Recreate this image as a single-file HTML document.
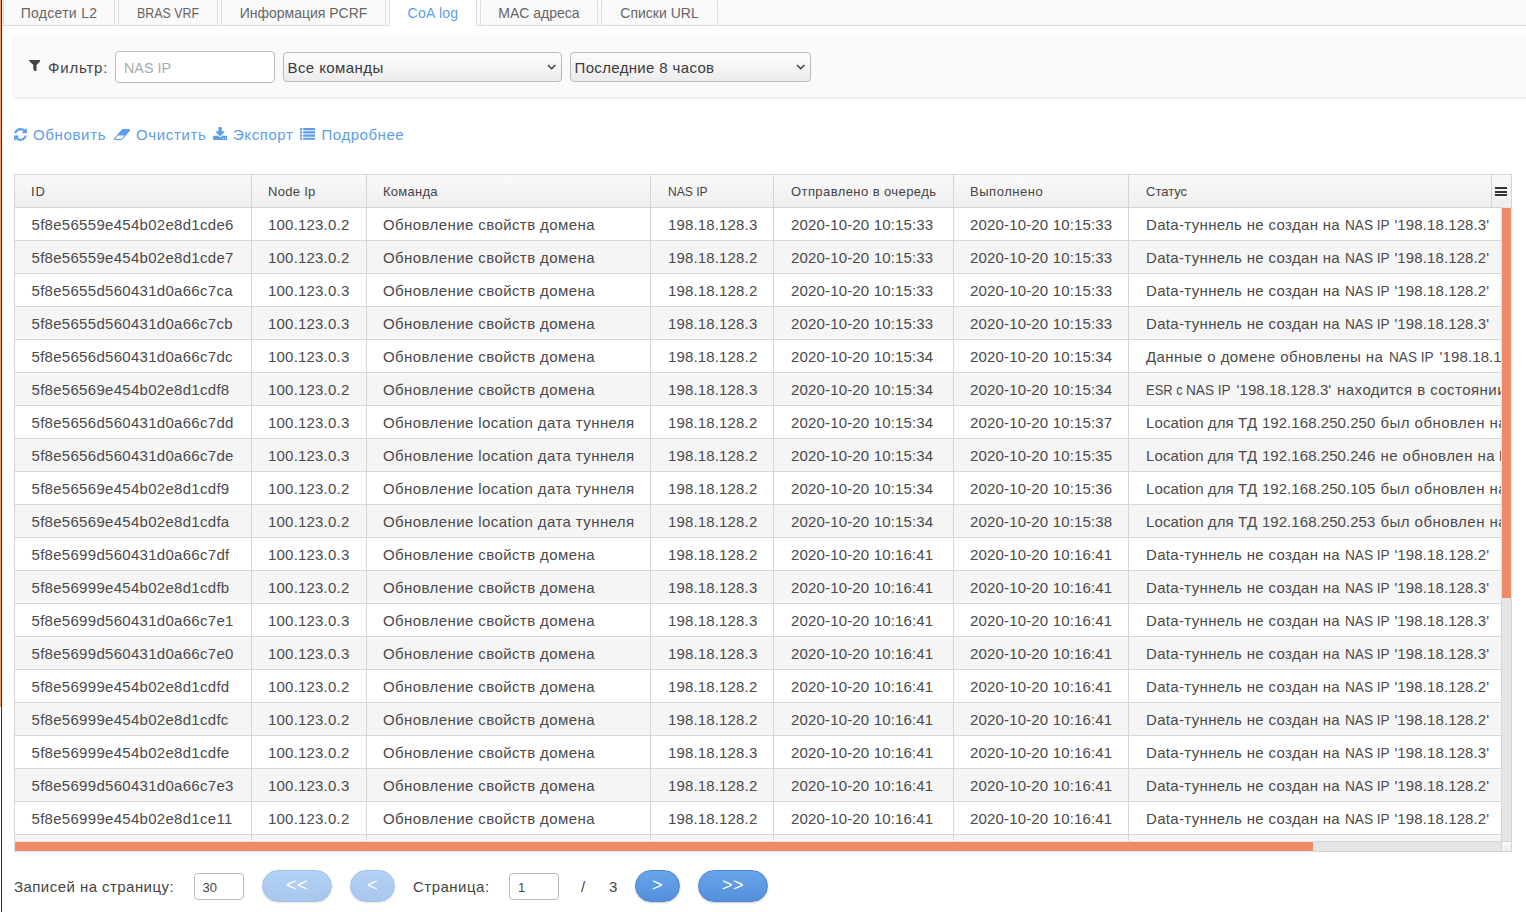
<!DOCTYPE html>
<html lang="ru">
<head>
<meta charset="utf-8">
<title>CoA log</title>
<style>
html,body{margin:0;padding:0;}
body{width:1526px;height:912px;overflow:hidden;background:#fff;position:relative;
  font-family:"Liberation Sans","DejaVu Sans",sans-serif;font-size:15px;color:#444;}
*{box-sizing:border-box;}
.edge-o{position:absolute;left:0;top:0;width:1px;height:707px;background:#fe986c;}
.edge-d{position:absolute;left:1px;top:0;width:1px;height:912px;background:#2c3136;}
/* tabs */
.tabbar{position:absolute;left:2px;top:0;width:1524px;height:26px;background:#fafafa;border-bottom:1px solid #ddd;}
.tab{position:absolute;top:-2px;height:28px;border:1px solid #ddd;border-radius:4px 4px 0 0;background:#fafafa;
  font-size:14px;color:#666;text-align:center;line-height:28px;white-space:nowrap;}
.tab.active{background:#fff;color:#5c9ded;border-bottom-color:#fff;}
.t1{left:1px;width:112px;letter-spacing:.3px}
.t2{left:116px;width:100px;}
.t3{left:219px;width:165px;}
.t4{left:387px;width:88px;letter-spacing:.25px}
.t5{left:478px;width:118px;}
.t6{left:599px;width:117px;}
/* filter */
.filter{position:absolute;left:14px;top:37px;width:1530px;height:60px;background:#fafafa;border-radius:3px;
  box-shadow:0 1px 3px rgba(0,0,0,.12);}
.filter .ico{position:absolute;left:14.5px;top:22.7px;width:11.8px;height:11.8px;}
.filter .lbl{letter-spacing:.8px;position:absolute;left:34px;top:21px;line-height:20px;font-size:15px;color:#444;white-space:nowrap;}
.filter .inp{position:absolute;left:101px;top:14px;width:160px;height:32px;border:1px solid #bbb;border-radius:4px;background:#fff;
  padding-left:7.5px;line-height:32px;color:#aaa;font-size:15px;}
.sel{position:absolute;top:15px;height:30px;border:1px solid #bababa;border-radius:4px;
  background:linear-gradient(#fdfdfd,#ececec);padding-left:3.5px;line-height:30px;font-size:15px;color:#3a3a3a;white-space:nowrap;}
.sel svg{position:absolute;right:4.5px;top:11.4px;}
.s1{left:269px;width:279px;letter-spacing:.42px}
.s2{left:556px;width:241px;letter-spacing:.35px}
/* toolbar */
.tb{position:absolute;top:0;left:0;width:0;height:0;font-size:15px;color:#5c9ded;white-space:nowrap;}
.tb a{position:absolute;top:125px;line-height:20px;color:#5c9ded;text-decoration:none;}
.tb svg{position:absolute;fill:#5c9ded;}
/* grid */
.grid{position:absolute;left:14px;top:174px;width:1498px;height:678px;border:1px solid #d4d4d4;background:#fff;overflow:hidden;}
.ghead{position:absolute;left:0;top:0;width:1496px;height:32px;background:linear-gradient(#fafafa,#eee);}
.ghead div{position:absolute;top:0;height:32px;border-right:1px solid #d4d4d4;padding-left:16px;line-height:34px;font-size:13px;color:#444;white-space:nowrap;}
.ghline{position:absolute;left:0;top:32px;width:1496px;height:1px;background:#d4d4d4;}
.gbody{position:absolute;left:0;top:33px;width:1486px;height:633px;overflow:hidden;}
table.gt{border-collapse:separate;border-spacing:0;table-layout:fixed;width:1900px;}
.gt td{height:33px;padding:0 0 0 16px;border-right:1px solid #d6d6d6;border-bottom:1px solid #d6d6d6;white-space:nowrap;overflow:hidden;font-size:15px;color:#4a4a4a;line-height:32px;}
.gt td span{position:relative;top:1px;}
.gt tr.even td{background:#f5f5f5;}
.c1{width:237px;letter-spacing:.29px;padding-left:16.5px!important}.c2{width:115px;letter-spacing:.2px}.c3{width:284px;letter-spacing:.41px}.c4{width:123px;letter-spacing:.15px;padding-left:17px!important}.c5{width:180px;letter-spacing:.16px;padding-left:17px!important}.c6{width:175px;letter-spacing:.16px;}.c7{width:786px;padding-left:17px!important}
.c7 b{font-weight:normal;display:inline-block;white-space:pre;vertical-align:top;}
.vs{position:absolute;left:1501px;top:208px;width:10px;height:633px;background:#e5e5e5;border-left:1px solid #d6d6d6;}
.vt{position:absolute;left:1501px;top:207px;width:11px;height:392px;background:#ee8b66;border:1px solid #e0e7eb;border-radius:1px;}
.hs{position:absolute;left:15px;top:841px;width:1486px;height:10px;background:#e5e5e5;border-top:1px solid #d6d6d6;}
.ht{position:absolute;left:14px;top:841px;width:1300px;height:11px;background:#ee8b66;border:1px solid #e0e7eb;border-radius:1px;}
.corner{position:absolute;left:1501px;top:841px;width:10px;height:10px;background:linear-gradient(#fafafa,#eee);border-left:1px solid #d6d6d6;border-top:1px solid #d6d6d6;}
.menu{position:absolute;left:1476px;top:0;width:20px;height:32px;border-left:1px solid #d4d4d4;}
.menu i{position:absolute;left:3px;width:12px;height:2px;background:#333;}
.menu i:nth-child(1){top:12px}.menu i:nth-child(2){top:15.5px}.menu i:nth-child(3){top:19px}
/* pager */
.pg{position:absolute;left:0;top:860px;width:1526px;height:52px;font-size:15px;color:#444;}
.pg span{position:absolute;top:17px;line-height:20px;white-space:nowrap;}
.pg .pin{position:absolute;top:13px;width:50px;height:27px;border:1px solid #bbb;border-radius:4px;background:#fff;font-size:13px;line-height:27px;padding-left:8px;color:#444;}
.btn{position:absolute;top:10px;height:32px;border-radius:16px;border:1px solid #4d86cf;background:linear-gradient(#69a5ea,#548fdb);
  color:#fff;text-align:center;line-height:29px;font-size:18px;letter-spacing:.5px;box-shadow:0 1px 2px rgba(0,0,0,.2);}
.btn.dis{opacity:.5;}
</style>
</head>
<body>
<div class="edge-o"></div><div class="edge-d"></div>
<div class="tabbar">
<div class="tab t1">Подсети L2</div>
<div class="tab t2"><span style="display:inline-block;transform:scaleX(.885)">BRAS VRF</span></div>
<div class="tab t3">Информация PCRF</div>
<div class="tab t4 active">CoA log</div>
<div class="tab t5">MAC адреса</div>
<div class="tab t6">Списки URL</div>
</div>
<div class="filter">
<svg class="ico" viewBox="191 256 1410 1408"><path d="M1595 295q17 41-14 70l-493 493v742q0 42-39 59-13 5-25 5-27 0-45-19l-256-256q-19-19-19-45V858L211 365q-31-29-14-70 17-39 59-39h1280q42 0 59 39z" fill="#444"/></svg>
<div class="lbl">Фильтр:</div>
<div class="inp"><span style="display:inline-block;transform:scaleX(.957);transform-origin:0 50%">NAS IP</span></div>
<div class="sel s1">Все команды<svg width="9.4" height="5.6" viewBox="0 0 10 6"><path d="M1 1l4 4 4-4" fill="none" stroke="#3a3a3a" stroke-width="1.5"/></svg></div>
<div class="sel s2">Последние 8 часов<svg width="9.4" height="5.6" viewBox="0 0 10 6"><path d="M1 1l4 4 4-4" fill="none" stroke="#3a3a3a" stroke-width="1.5"/></svg></div>
</div>
<div class="tb">
<svg style="left:14px;top:128px;width:12.9px;height:12.9px" viewBox="0 0 1536 1536"><path d="M1511 928q0 5-1 7-64 268-268 434.5T764 1536q-146 0-282.5-55T238 1324l-129 129q-19 19-45 19t-45-19-19-45V960q0-26 19-45t45-19h448q26 0 45 19t19 45-19 45l-137 137q71 66 161 102t187 36q134 0 250-65t186-179q11-17 53-117 8-23 30-23h192q13 0 22.5 9.500t9.500 22.500zm25-800v448q0 26-19 45t-45 19h-448q-26 0-45-19t-19-45 19-45l138-138Q969 256 768 256q-134 0-250 65T332 500q-11 17-53 117-8 23-30 23H50q-13 0-22.500-9.500T18 608v-7q65-268 270-434.500T768 0q146 0 284 55.500T1297 212l130-129q19-19 45-19t45 19 19 45z"/></svg>
<a style="left:33px;letter-spacing:.65px">Обновить</a>
<svg style="left:114px;top:129px;width:16.2px;height:11px" viewBox="0 256 1920 1280" preserveAspectRatio="none"><path d="M896 1408l336-384H464l-336 384h768zm1013-1077q15 34 9.500 71.500T1888 468l-896 1024q-38 44-96 44H128q-38 0-69.500-20.500T11 1461q-15-34-9.500-71.500T32 1324L928 300q38-44 96-44h768q38 0 69.500 20.500T1909 331z"/></svg>
<a style="left:136px;letter-spacing:.63px">Очистить</a>
<svg style="left:213.1px;top:127px;width:14.3px;height:13px" viewBox="64 0 1664 1536"><path d="M1344 1344q0-26-19-45t-45-19-45 19-19 45 19 45 45 19 45-19 19-45zm256 0q0-26-19-45t-45-19-45 19-19 45 19 45 45 19 45-19 19-45zm128-224v320q0 40-28 68t-68 28H160q-40 0-68-28t-28-68v-320q0-40 28-68t68-28h465l135 136q58 56 136 56t136-56l136-136h464q40 0 68 28t28 68zm-325-569q17 41-14 70l-448 448q-18 19-45 19t-45-19L403 621q-31-29-14-70 17-39 59-39h256V64q0-26 19-45t45-19h256q26 0 45 19t19 45v448h256q42 0 59 39z"/></svg>
<a style="left:233px;letter-spacing:.57px">Экспорт</a>
<svg style="left:300.2px;top:127px;width:15px;height:15px" viewBox="0 0 1792 1792"><path d="M0 128h256v256H0zM384 128h1408v256H384zM0 512h256v256H0zM384 512h1408v256H384zM0 896h256v256H0zM384 896h1408v256H384zM0 1280h256v256H0zM384 1280h1408v256H384z"/></svg>
<a style="left:321.5px;letter-spacing:.55px">Подробнее</a>
</div>
<div class="grid">
<div class="ghead">
<div style="left:0;width:237px;letter-spacing:.9px">ID</div>
<div style="left:237px;width:115px;letter-spacing:.3px">Node Ip</div>
<div style="left:352px;width:284px;letter-spacing:.25px">Команда</div>
<div style="left:636px;width:123px;padding-left:17px"><span style="display:inline-block;transform:scaleX(.93);transform-origin:0 50%">NAS IP</span></div>
<div style="left:759px;width:180px;letter-spacing:.42px;padding-left:17px">Отправлено в очередь</div>
<div style="left:939px;width:175px;letter-spacing:.55px">Выполнено</div>
<div style="left:1114px;width:364px;border-right:0;padding-left:17px">Статус</div>
<span class="menu"><i></i><i></i><i></i></span>
</div>
<div class="ghline"></div>
<div class="gbody">
<table class="gt">
<tbody>
<tr class="odd"><td class="c1"><span>5f8e56559e454b02e8d1cde6</span></td><td class="c2"><span>100.123.0.2</span></td><td class="c3"><span>Обновление свойств домена</span></td><td class="c4"><span>198.18.128.3</span></td><td class="c5"><span>2020-10-20 10:15:33</span></td><td class="c6"><span>2020-10-20 10:15:33</span></td><td class="c7"><span><b style="width:199.1px;letter-spacing:0.333px">Data-туннель не создан на </b><b style="width:49.3px;transform:scaleX(0.908);transform-origin:0 50%">NAS IP </b><b style="letter-spacing:0.11px">'198.18.128.3'</b></span></td></tr>
<tr class="even"><td class="c1"><span>5f8e56559e454b02e8d1cde7</span></td><td class="c2"><span>100.123.0.2</span></td><td class="c3"><span>Обновление свойств домена</span></td><td class="c4"><span>198.18.128.2</span></td><td class="c5"><span>2020-10-20 10:15:33</span></td><td class="c6"><span>2020-10-20 10:15:33</span></td><td class="c7"><span><b style="width:199.1px;letter-spacing:0.333px">Data-туннель не создан на </b><b style="width:49.3px;transform:scaleX(0.908);transform-origin:0 50%">NAS IP </b><b style="letter-spacing:0.11px">'198.18.128.2'</b></span></td></tr>
<tr class="odd"><td class="c1"><span>5f8e5655d560431d0a66c7ca</span></td><td class="c2"><span>100.123.0.3</span></td><td class="c3"><span>Обновление свойств домена</span></td><td class="c4"><span>198.18.128.2</span></td><td class="c5"><span>2020-10-20 10:15:33</span></td><td class="c6"><span>2020-10-20 10:15:33</span></td><td class="c7"><span><b style="width:199.1px;letter-spacing:0.333px">Data-туннель не создан на </b><b style="width:49.3px;transform:scaleX(0.908);transform-origin:0 50%">NAS IP </b><b style="letter-spacing:0.11px">'198.18.128.2'</b></span></td></tr>
<tr class="even"><td class="c1"><span>5f8e5655d560431d0a66c7cb</span></td><td class="c2"><span>100.123.0.3</span></td><td class="c3"><span>Обновление свойств домена</span></td><td class="c4"><span>198.18.128.3</span></td><td class="c5"><span>2020-10-20 10:15:33</span></td><td class="c6"><span>2020-10-20 10:15:33</span></td><td class="c7"><span><b style="width:199.1px;letter-spacing:0.333px">Data-туннель не создан на </b><b style="width:49.3px;transform:scaleX(0.908);transform-origin:0 50%">NAS IP </b><b style="letter-spacing:0.11px">'198.18.128.3'</b></span></td></tr>
<tr class="odd"><td class="c1"><span>5f8e5656d560431d0a66c7dc</span></td><td class="c2"><span>100.123.0.3</span></td><td class="c3"><span>Обновление свойств домена</span></td><td class="c4"><span>198.18.128.2</span></td><td class="c5"><span>2020-10-20 10:15:34</span></td><td class="c6"><span>2020-10-20 10:15:34</span></td><td class="c7"><span><b style="width:243.2px;letter-spacing:0.42px">Данные о домене обновлены на </b><b style="width:50.4px;transform:scaleX(0.908);transform-origin:0 50%">NAS IP </b><b style="letter-spacing:0.11px">'198.18.128.2'</b></span></td></tr>
<tr class="even"><td class="c1"><span>5f8e56569e454b02e8d1cdf8</span></td><td class="c2"><span>100.123.0.2</span></td><td class="c3"><span>Обновление свойств домена</span></td><td class="c4"><span>198.18.128.3</span></td><td class="c5"><span>2020-10-20 10:15:34</span></td><td class="c6"><span>2020-10-20 10:15:34</span></td><td class="c7"><span><b style="width:40.4px;transform:scaleX(0.863);transform-origin:0 50%">ESR с </b><b style="width:50.1px;transform:scaleX(0.908);transform-origin:0 50%">NAS IP </b><b style="width:100.6px;letter-spacing:0.11px">'198.18.128.3' </b><b style="letter-spacing:0.45px">находится в состоянии недоступен</b></span></td></tr>
<tr class="odd"><td class="c1"><span>5f8e5656d560431d0a66c7dd</span></td><td class="c2"><span>100.123.0.3</span></td><td class="c3"><span>Обновление location дата туннеля</span></td><td class="c4"><span>198.18.128.2</span></td><td class="c5"><span>2020-10-20 10:15:34</span></td><td class="c6"><span>2020-10-20 10:15:37</span></td><td class="c7"><span><b style="width:115.9px;letter-spacing:0.11px">Location для ТД </b><b style="width:118.5px;letter-spacing:0.06px">192.168.250.250 </b><b style="width:130.5px;letter-spacing:0.47px">был обновлен на </b><b style="width:50px;transform:scaleX(0.908);transform-origin:0 50%">NAS IP </b><b style="letter-spacing:0.11px">'198.18.128.2'</b></span></td></tr>
<tr class="even"><td class="c1"><span>5f8e5656d560431d0a66c7de</span></td><td class="c2"><span>100.123.0.3</span></td><td class="c3"><span>Обновление location дата туннеля</span></td><td class="c4"><span>198.18.128.2</span></td><td class="c5"><span>2020-10-20 10:15:34</span></td><td class="c6"><span>2020-10-20 10:15:35</span></td><td class="c7"><span><b style="width:115.9px;letter-spacing:0.11px">Location для ТД </b><b style="width:118.5px;letter-spacing:0.06px">192.168.250.246 </b><b style="width:118.6px;letter-spacing:0.47px">не обновлен на </b><b style="width:50px;transform:scaleX(0.908);transform-origin:0 50%">NAS IP </b><b style="letter-spacing:0.11px">'198.18.128.2'</b></span></td></tr>
<tr class="odd"><td class="c1"><span>5f8e56569e454b02e8d1cdf9</span></td><td class="c2"><span>100.123.0.2</span></td><td class="c3"><span>Обновление location дата туннеля</span></td><td class="c4"><span>198.18.128.2</span></td><td class="c5"><span>2020-10-20 10:15:34</span></td><td class="c6"><span>2020-10-20 10:15:36</span></td><td class="c7"><span><b style="width:115.9px;letter-spacing:0.11px">Location для ТД </b><b style="width:118.5px;letter-spacing:0.06px">192.168.250.105 </b><b style="width:130.5px;letter-spacing:0.47px">был обновлен на </b><b style="width:50px;transform:scaleX(0.908);transform-origin:0 50%">NAS IP </b><b style="letter-spacing:0.11px">'198.18.128.2'</b></span></td></tr>
<tr class="even"><td class="c1"><span>5f8e56569e454b02e8d1cdfa</span></td><td class="c2"><span>100.123.0.2</span></td><td class="c3"><span>Обновление location дата туннеля</span></td><td class="c4"><span>198.18.128.2</span></td><td class="c5"><span>2020-10-20 10:15:34</span></td><td class="c6"><span>2020-10-20 10:15:38</span></td><td class="c7"><span><b style="width:115.9px;letter-spacing:0.11px">Location для ТД </b><b style="width:118.5px;letter-spacing:0.06px">192.168.250.253 </b><b style="width:130.5px;letter-spacing:0.47px">был обновлен на </b><b style="width:50px;transform:scaleX(0.908);transform-origin:0 50%">NAS IP </b><b style="letter-spacing:0.11px">'198.18.128.2'</b></span></td></tr>
<tr class="odd"><td class="c1"><span>5f8e5699d560431d0a66c7df</span></td><td class="c2"><span>100.123.0.3</span></td><td class="c3"><span>Обновление свойств домена</span></td><td class="c4"><span>198.18.128.2</span></td><td class="c5"><span>2020-10-20 10:16:41</span></td><td class="c6"><span>2020-10-20 10:16:41</span></td><td class="c7"><span><b style="width:199.1px;letter-spacing:0.333px">Data-туннель не создан на </b><b style="width:49.3px;transform:scaleX(0.908);transform-origin:0 50%">NAS IP </b><b style="letter-spacing:0.11px">'198.18.128.2'</b></span></td></tr>
<tr class="even"><td class="c1"><span>5f8e56999e454b02e8d1cdfb</span></td><td class="c2"><span>100.123.0.2</span></td><td class="c3"><span>Обновление свойств домена</span></td><td class="c4"><span>198.18.128.3</span></td><td class="c5"><span>2020-10-20 10:16:41</span></td><td class="c6"><span>2020-10-20 10:16:41</span></td><td class="c7"><span><b style="width:199.1px;letter-spacing:0.333px">Data-туннель не создан на </b><b style="width:49.3px;transform:scaleX(0.908);transform-origin:0 50%">NAS IP </b><b style="letter-spacing:0.11px">'198.18.128.3'</b></span></td></tr>
<tr class="odd"><td class="c1"><span>5f8e5699d560431d0a66c7e1</span></td><td class="c2"><span>100.123.0.3</span></td><td class="c3"><span>Обновление свойств домена</span></td><td class="c4"><span>198.18.128.3</span></td><td class="c5"><span>2020-10-20 10:16:41</span></td><td class="c6"><span>2020-10-20 10:16:41</span></td><td class="c7"><span><b style="width:199.1px;letter-spacing:0.333px">Data-туннель не создан на </b><b style="width:49.3px;transform:scaleX(0.908);transform-origin:0 50%">NAS IP </b><b style="letter-spacing:0.11px">'198.18.128.3'</b></span></td></tr>
<tr class="even"><td class="c1"><span>5f8e5699d560431d0a66c7e0</span></td><td class="c2"><span>100.123.0.3</span></td><td class="c3"><span>Обновление свойств домена</span></td><td class="c4"><span>198.18.128.3</span></td><td class="c5"><span>2020-10-20 10:16:41</span></td><td class="c6"><span>2020-10-20 10:16:41</span></td><td class="c7"><span><b style="width:199.1px;letter-spacing:0.333px">Data-туннель не создан на </b><b style="width:49.3px;transform:scaleX(0.908);transform-origin:0 50%">NAS IP </b><b style="letter-spacing:0.11px">'198.18.128.3'</b></span></td></tr>
<tr class="odd"><td class="c1"><span>5f8e56999e454b02e8d1cdfd</span></td><td class="c2"><span>100.123.0.2</span></td><td class="c3"><span>Обновление свойств домена</span></td><td class="c4"><span>198.18.128.2</span></td><td class="c5"><span>2020-10-20 10:16:41</span></td><td class="c6"><span>2020-10-20 10:16:41</span></td><td class="c7"><span><b style="width:199.1px;letter-spacing:0.333px">Data-туннель не создан на </b><b style="width:49.3px;transform:scaleX(0.908);transform-origin:0 50%">NAS IP </b><b style="letter-spacing:0.11px">'198.18.128.2'</b></span></td></tr>
<tr class="even"><td class="c1"><span>5f8e56999e454b02e8d1cdfc</span></td><td class="c2"><span>100.123.0.2</span></td><td class="c3"><span>Обновление свойств домена</span></td><td class="c4"><span>198.18.128.2</span></td><td class="c5"><span>2020-10-20 10:16:41</span></td><td class="c6"><span>2020-10-20 10:16:41</span></td><td class="c7"><span><b style="width:199.1px;letter-spacing:0.333px">Data-туннель не создан на </b><b style="width:49.3px;transform:scaleX(0.908);transform-origin:0 50%">NAS IP </b><b style="letter-spacing:0.11px">'198.18.128.2'</b></span></td></tr>
<tr class="odd"><td class="c1"><span>5f8e56999e454b02e8d1cdfe</span></td><td class="c2"><span>100.123.0.2</span></td><td class="c3"><span>Обновление свойств домена</span></td><td class="c4"><span>198.18.128.3</span></td><td class="c5"><span>2020-10-20 10:16:41</span></td><td class="c6"><span>2020-10-20 10:16:41</span></td><td class="c7"><span><b style="width:199.1px;letter-spacing:0.333px">Data-туннель не создан на </b><b style="width:49.3px;transform:scaleX(0.908);transform-origin:0 50%">NAS IP </b><b style="letter-spacing:0.11px">'198.18.128.3'</b></span></td></tr>
<tr class="even"><td class="c1"><span>5f8e5699d560431d0a66c7e3</span></td><td class="c2"><span>100.123.0.3</span></td><td class="c3"><span>Обновление свойств домена</span></td><td class="c4"><span>198.18.128.2</span></td><td class="c5"><span>2020-10-20 10:16:41</span></td><td class="c6"><span>2020-10-20 10:16:41</span></td><td class="c7"><span><b style="width:199.1px;letter-spacing:0.333px">Data-туннель не создан на </b><b style="width:49.3px;transform:scaleX(0.908);transform-origin:0 50%">NAS IP </b><b style="letter-spacing:0.11px">'198.18.128.2'</b></span></td></tr>
<tr class="odd"><td class="c1"><span>5f8e56999e454b02e8d1ce11</span></td><td class="c2"><span>100.123.0.2</span></td><td class="c3"><span>Обновление свойств домена</span></td><td class="c4"><span>198.18.128.2</span></td><td class="c5"><span>2020-10-20 10:16:41</span></td><td class="c6"><span>2020-10-20 10:16:41</span></td><td class="c7"><span><b style="width:199.1px;letter-spacing:0.333px">Data-туннель не создан на </b><b style="width:49.3px;transform:scaleX(0.908);transform-origin:0 50%">NAS IP </b><b style="letter-spacing:0.11px">'198.18.128.2'</b></span></td></tr>
<tr class="even last"><td class="c1"></td><td class="c2"></td><td class="c3"></td><td class="c4"></td><td class="c5"></td><td class="c6"></td><td class="c7"></td></tr>
</tbody>
</table>
</div>
</div>
<div class="vs"></div><div class="hs"></div><div class="corner"></div>
<div class="vt"></div><div class="ht"></div>
<div class="pg">
<span style="left:14px;letter-spacing:.45px">Записей на страницу:</span>
<div class="pin" style="left:194px;padding-left:7.5px">30</div>
<div class="btn dis" style="left:262px;width:70px">&lt;&lt;</div>
<div class="btn dis" style="left:350px;width:45px">&lt;</div>
<span style="left:413px;letter-spacing:.49px">Страница:</span>
<div class="pin" style="left:509px">1</div>
<span style="left:581px">/</span>
<span style="left:609px">3</span>
<div class="btn" style="left:635px;width:45px">&gt;</div>
<div class="btn" style="left:698px;width:70px">&gt;&gt;</div>
</div>
</body>
</html>
